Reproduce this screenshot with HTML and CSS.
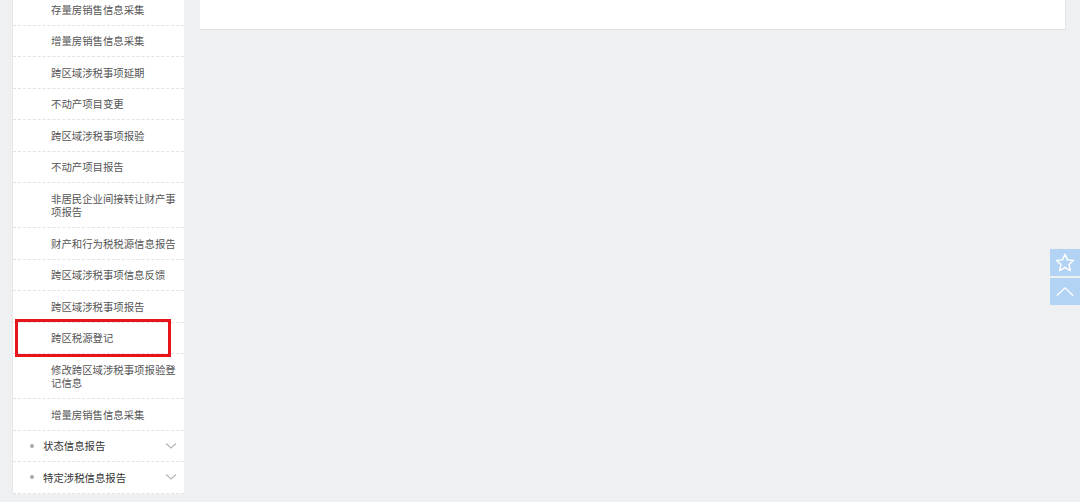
FILE: index.html
```html
<!DOCTYPE html>
<html lang="zh">
<head>
<meta charset="utf-8">
<link rel="stylesheet" href="styles.css">
</head>
<body>
<div class="page">
  <aside class="sidebar">
    <ul class="menu">
      <li class="item">存量房销售信息采集</li>
      <li class="item">增量房销售信息采集</li>
      <li class="item">跨区域涉税事项延期</li>
      <li class="item">不动产项目变更</li>
      <li class="item">跨区域涉税事项报验</li>
      <li class="item">不动产项目报告</li>
      <li class="item">非居民企业间接转让财产事项报告</li>
      <li class="item">财产和行为税税源信息报告</li>
      <li class="item">跨区域涉税事项信息反馈</li>
      <li class="item">跨区域涉税事项报告</li>
      <li class="item marked">跨区税源登记<span class="mark"></span></li>
      <li class="item">修改跨区域涉税事项报验登记信息</li>
      <li class="item">增量房销售信息采集</li>
      <li class="group"><span class="dot"></span><span class="gtext">状态信息报告</span><svg class="chev" viewBox="0 0 12 8" width="12" height="8"><path d="M1 1.5 L6 6 L11 1.5" fill="none" stroke="#b5b5b5" stroke-width="1.1"/></svg></li>
      <li class="group"><span class="dot"></span><span class="gtext">特定涉税信息报告</span><svg class="chev" viewBox="0 0 12 8" width="12" height="8"><path d="M1 1.5 L6 6 L11 1.5" fill="none" stroke="#b5b5b5" stroke-width="1.1"/></svg></li>
    </ul>
  </aside>
  <main class="main">
    <div class="panel"></div>
  </main>
</div>
<div class="float-tools">
  <div class="ftool">
    <svg viewBox="0 0 24 24" width="22" height="22"><path d="M12 2.6 L14.8 8.6 L21.3 9.3 L16.4 13.7 L17.8 20.2 L12 16.9 L6.2 20.2 L7.6 13.7 L2.7 9.3 L9.2 8.6 Z" fill="none" stroke="#fff" stroke-width="1.6" stroke-linejoin="round"/></svg>
  </div>
  <div class="ftool">
    <svg viewBox="0 0 24 24" width="22" height="22"><path d="M3 16 L12 7.5 L21 16" fill="none" stroke="#fff" stroke-width="1.4"/></svg>
  </div>
</div>
</body>
</html>
```
FILE: styles.css
```css
html, body {
  margin: 0;
  padding: 0;
  background: #eff0f2;
  font-family: "Microsoft YaHei", "Noto Sans CJK SC", "Liberation Sans", sans-serif;
  height: 100%;
  overflow: hidden;
}
.page {
  display: flex;
  align-items: flex-start;
  padding-left: 12px;
  gap: 16px;
}
.sidebar {
  width: 171px;
  background: #fff;
  border-left: 1px solid #e6e7e9;
  margin-top: -6px;
}
.menu {
  list-style: none;
  margin: 0;
  padding: 0;
}
.item {
  position: relative;
  padding: 8.5px 6px 8.5px 38px;
  font-size: 10.4px;
  line-height: 13.5px;
  color: #555;
  border-bottom: 1px dashed #e3e3e3;
}
.mark {
  position: absolute;
  left: 2px;
  top: -3.5px;
  width: 150px;
  height: 32px;
  border: 3px solid #e8141c;
}
.group {
  display: flex;
  align-items: center;
  padding: 8.5px 7px 8.5px 17px;
  font-size: 10.4px;
  line-height: 13.5px;
  color: #333;
  border-bottom: 1px dashed #e3e3e3;
}
.dot {
  width: 4px;
  height: 4px;
  border-radius: 50%;
  background: #a8a8a8;
  margin-right: 9px;
}
.gtext {
  flex: 1;
}
.main {
  width: 866px;
}
.panel {
  height: 29px;
  background: #fff;
  border-bottom: 1px solid #e2e3e5;
  border-right: 1px solid #e6e7e9;
}
.float-tools {
  position: fixed;
  right: 0;
  top: 249px;
  display: flex;
  flex-direction: column;
  gap: 2px;
}
.ftool {
  width: 30px;
  height: 27px;
  background: #b3d3f4;
  display: flex;
  align-items: center;
  justify-content: center;
}
```
